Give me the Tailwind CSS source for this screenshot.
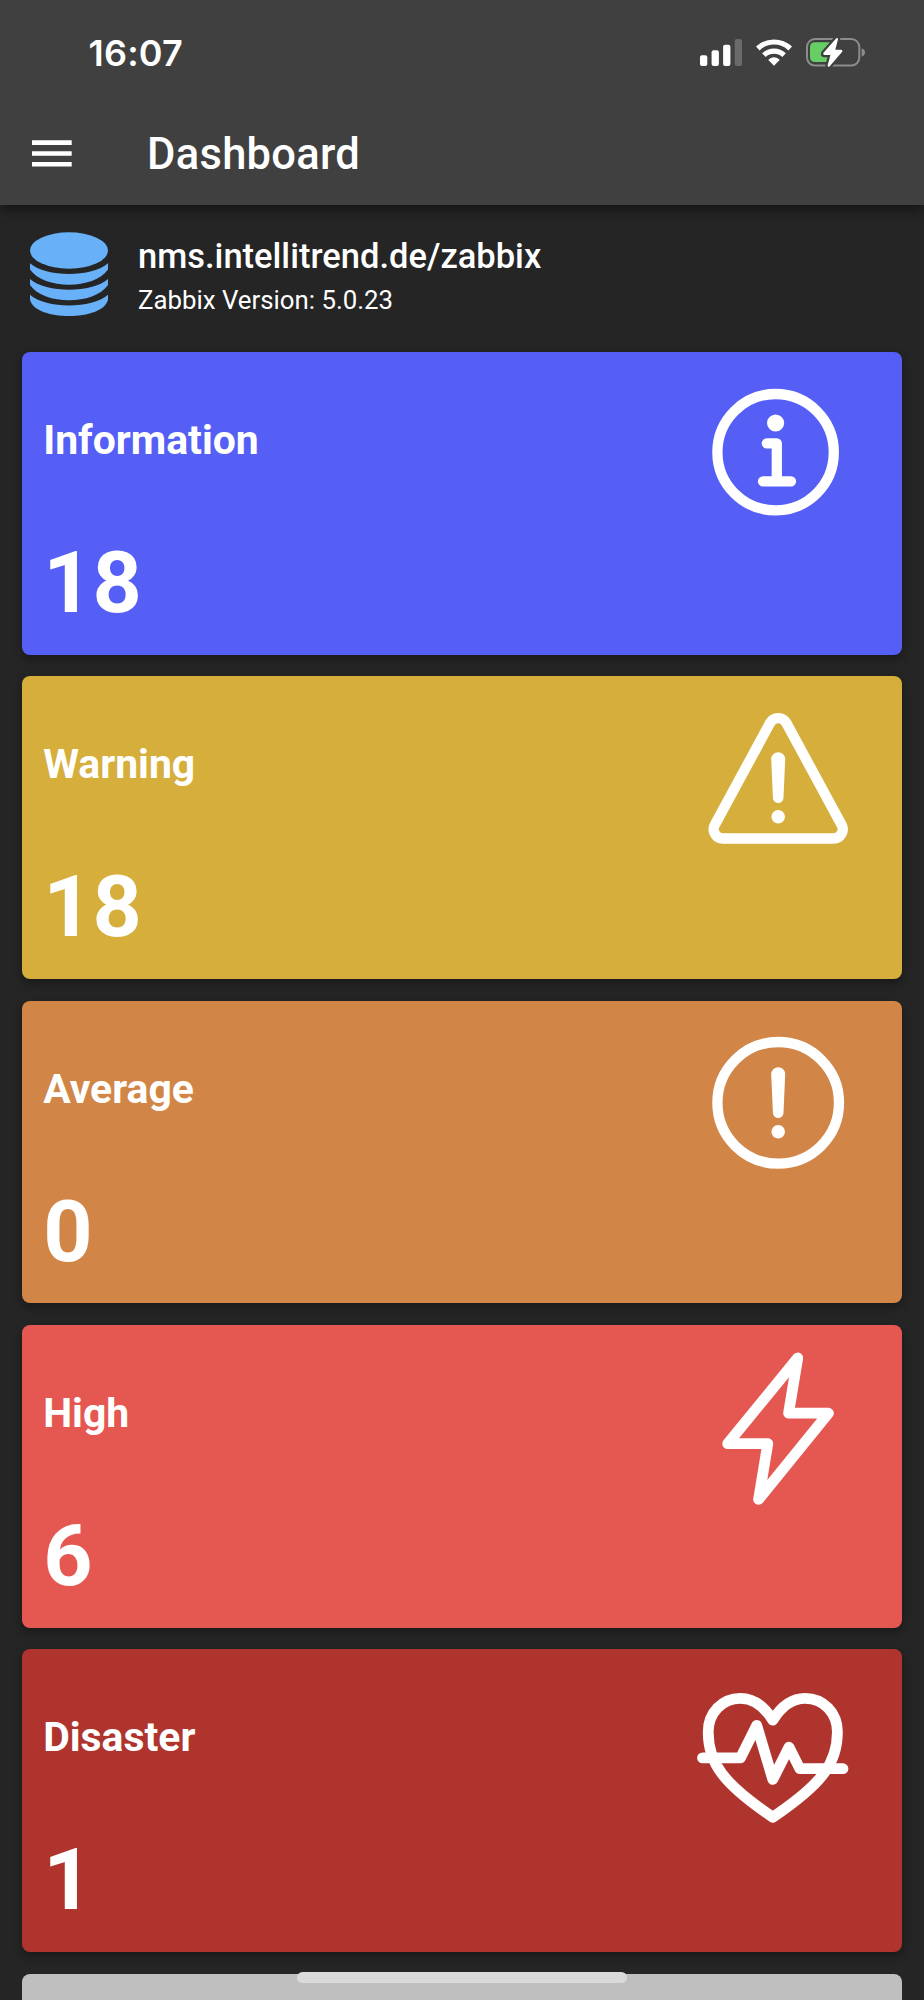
<!DOCTYPE html>
<html lang="en">
<head>
<meta charset="utf-8">
<title>Dashboard</title>
<script src="https://cdn.jsdelivr.net/npm/@tailwindcss/browser@4"></script>
</head>
<body class="bg-[#252525] text-white font-['Roboto',sans-serif]">
<div class="relative flex h-[2000px] w-[924px] flex-col overflow-hidden">
  <header class="relative z-10 h-[205px] shrink-0 bg-[#404040] shadow-[0_4px_12px_rgba(0,0,0,0.5)]">
    <div class="flex h-[106px] items-center justify-between pl-[88.500px]">
      <div class="font-['Inter',sans-serif] text-[36px] leading-none font-semibold tracking-[0.2px]">16:07</div>
      <svg class="h-[106px] w-[264px]" viewBox="660 0 264 106">
        <g fill="#fff">
          <rect x="700" y="55.2" width="7.3" height="10.8" rx="2"/>
          <rect x="711.6" y="50.2" width="7.3" height="15.8" rx="2"/>
          <rect x="723.1" y="44.7" width="7.3" height="21.3" rx="2"/>
          <rect x="734.7" y="39" width="7.3" height="27" rx="2" fill="#6a6a6a"/>
          <path d="M774 65.7 L768.6 60.3 Q768.2 59.7 768.9 59.2 Q774 55.4 779.1 59.2 Q779.8 59.7 779.4 60.3 Z"/>
        </g>
        <g fill="none" stroke="#fff" stroke-width="5.2">
          <path d="M757.8 48.500 A23.5 23.5 0 0 1 790.2 48.500"/>
          <path d="M763.9 55.2 A14.8 14.8 0 0 1 784.1 55.2"/>
        </g>
        <rect x="807" y="39" width="52.3" height="26.6" rx="8" fill="none" stroke="#8c8c8c" stroke-width="2"/>
        <path d="M861.7 48.3 Q865 49.5 865 52.4 Q865 55.300 861.7 56.500 Z" fill="#8c8c8c"/>
        <path d="M815 42.300 H831 L821 53.500 Q820.800 57 824 57 H829 L827 62 H815 Q810 62 810 57 V47.300 Q810 42.300 815 42.300 Z" fill="#65cf66"/>
        <path d="M836.300 38.300 L823.500 52.800 Q822.500 54.600 824.500 54.900 H830.400 L827.600 65.500 Q828 67.500 829.700 66.200 L842.200 51.800 Q843 50.100 841.200 49.800 H835.300 L838 39.300 Q837.800 37.300 836.300 38.300 Z" fill="#fff" stroke="#404040" stroke-width="4.500" paint-order="stroke"/>
      </svg>
    </div>
    <div class="flex h-[99px] items-start gap-[75px] pl-[32px]">
      <svg class="mt-[34px] h-[27px] w-[40px]" viewBox="0 0 40 27" fill="#fff">
        <path d="M0 .3H39.700V4.900H0ZM0 11.200H39.700V15.800H0ZM0 22H39.700V26.600H0Z"/>
      </svg>
      <h1 class="mt-[23px] text-[43.500px] leading-[52px] font-medium tracking-[0.3px]">Dashboard</h1>
    </div>
  </header>

  <section class="flex h-[147px] shrink-0 items-start gap-[30px] pt-[27px] pl-[30px]">
    <svg class="h-[85px] w-[78px]" viewBox="30 232 78 85" fill="#68b1f8">
      <ellipse cx="69" cy="250.500" rx="39" ry="18.200"/>
      <path d="M30 263.300C46 277.600 92 277.600 108 263.300V269.500C94 289.800 44 289.800 30 269.500Z"/>
      <path d="M30 279C46 293.300 92 293.300 108 279V285C94 305.400 44 305.400 30 285Z"/>
      <path d="M30 294.700C46 309 92 309 108 294.700V299.500C104 321.500 34 321.500 30 299.500Z"/>
    </svg>
    <div class="flex flex-col">
      <div class="mt-[4px] text-[34.500px] leading-[40px] font-medium">nms.intellitrend.de/zabbix</div>
      <div class="mt-[9px] text-[25.800px] leading-[30px]">Zabbix Version: 5.0.23</div>
    </div>
  </section>

  <main class="flex flex-col gap-[21.500px] px-[21.700px]">
    <article class="flex h-[302.840px] shrink-0 justify-between rounded-[8px] bg-[#555ff5] shadow-[0_4px_10px_rgba(0,0,0,0.35)]">
      <div class="flex flex-col pl-[21.500px]">
        <h2 class="mt-[64px] text-[40.900px] leading-[48px] font-bold">Information</h2>
        <p class="mt-[69px] text-[86px] leading-[100px] font-bold">18</p>
      </div>
      <svg class="h-[303px] w-[222.300px]" viewBox="680 0 222.300 303" fill="none" stroke="#fff" stroke-width="10.300" stroke-linecap="round" stroke-linejoin="round">
        <circle cx="775.600" cy="100.200" r="58.200"/>
        <circle cx="775.600" cy="71" r="8.600" fill="#fff" stroke="none"/>
        <path d="M766.800 91.300H776.800V129.300M763 129.300H791"/>
      </svg>
    </article>

    <article class="flex h-[302.840px] shrink-0 justify-between rounded-[8px] bg-[#d5ae3b] shadow-[0_4px_10px_rgba(0,0,0,0.35)]">
      <div class="flex flex-col pl-[21.500px]">
        <h2 class="mt-[64px] text-[40.900px] leading-[48px] font-bold">Warning</h2>
        <p class="mt-[69px] text-[86px] leading-[100px] font-bold">18</p>
      </div>
      <svg class="h-[303px] w-[222.300px]" viewBox="680 0 222.300 303" fill="none" stroke="#fff" stroke-width="10.300">
        <path d="M770 47A9.300 9.300 0 0 1 786.400 47L841.300 148.300A9.300 9.300 0 0 1 833.100 162.500H723.300A9.300 9.300 0 0 1 715.100 148.300Z"/>
        <path d="M771.200 83.200A7 7 0 0 1 785.200 83.200L783.500 121.800A5.250 5.250 0 0 1 772.900 121.800Z" fill="#fff" stroke="none"/>
        <circle cx="778.200" cy="140.800" r="6.800" fill="#fff" stroke="none"/>
      </svg>
    </article>

    <article class="flex h-[302.840px] shrink-0 justify-between rounded-[8px] bg-[#d18546] shadow-[0_4px_10px_rgba(0,0,0,0.35)]">
      <div class="flex flex-col pl-[21.500px]">
        <h2 class="mt-[64px] text-[40.900px] leading-[48px] font-bold">Average</h2>
        <p class="mt-[69px] text-[86px] leading-[100px] font-bold">0</p>
      </div>
      <svg class="h-[303px] w-[222.300px]" viewBox="680 0 222.300 303" fill="none" stroke="#fff" stroke-width="10.300">
        <circle cx="778.200" cy="101.800" r="60.800"/>
        <path d="M771.200 73.200A7 7 0 0 1 785.200 73.200L783.500 111.800A5.250 5.250 0 0 1 772.900 111.800Z" fill="#fff" stroke="none"/>
        <circle cx="778.200" cy="130.800" r="6.800" fill="#fff" stroke="none"/>
      </svg>
    </article>

    <article class="flex h-[302.840px] shrink-0 justify-between rounded-[8px] bg-[#e55852] shadow-[0_4px_10px_rgba(0,0,0,0.35)]">
      <div class="flex flex-col pl-[21.500px]">
        <h2 class="mt-[64px] text-[40.900px] leading-[48px] font-bold">High</h2>
        <p class="mt-[69px] text-[86px] leading-[100px] font-bold">6</p>
      </div>
      <svg class="h-[303px] w-[222.300px]" viewBox="680 0 222.300 303" fill="none" stroke="#fff" stroke-width="10.800" stroke-linejoin="round">
        <path d="M797.700 33L788.600 88.200H828.500L758.600 174.300L767.800 118.700H727.700Z"/>
      </svg>
    </article>

    <article class="flex h-[302.840px] shrink-0 justify-between rounded-[8px] bg-[#ae342d] shadow-[0_4px_10px_rgba(0,0,0,0.35)]">
      <div class="flex flex-col pl-[21.500px]">
        <h2 class="mt-[64px] text-[40.900px] leading-[48px] font-bold">Disaster</h2>
        <p class="mt-[69px] text-[86px] leading-[100px] font-bold">1</p>
      </div>
      <svg class="h-[303px] w-[222.300px]" viewBox="680 0 222.300 303" fill="none" stroke="#fff" stroke-width="10.800" stroke-linecap="round" stroke-linejoin="round">
        <path d="M772.800 71.200C764 57 753 49.400 740.500 49.400C722 49.400 708.200 64 708.200 83C708.200 114 723 134.500 772.800 168.200C822.600 134.500 837.400 114 837.400 83C837.400 64 823.600 49.400 805.100 49.400C792.600 49.400 781.600 57 772.800 71.200Z"/>
        <path d="M702.500 108.900H740.500L756.700 76.400L772.800 130.400L789 98.200L799.800 119.700H843"/>
      </svg>
    </article>

    <article class="h-[302.840px] shrink-0 rounded-[8px] bg-[#bfbfbf]"></article>
  </main>

  <div class="absolute top-[1971.500px] left-[297px] h-[11px] w-[330px] rounded-full bg-[#dadada]"></div>
</div>
</body>
</html>
